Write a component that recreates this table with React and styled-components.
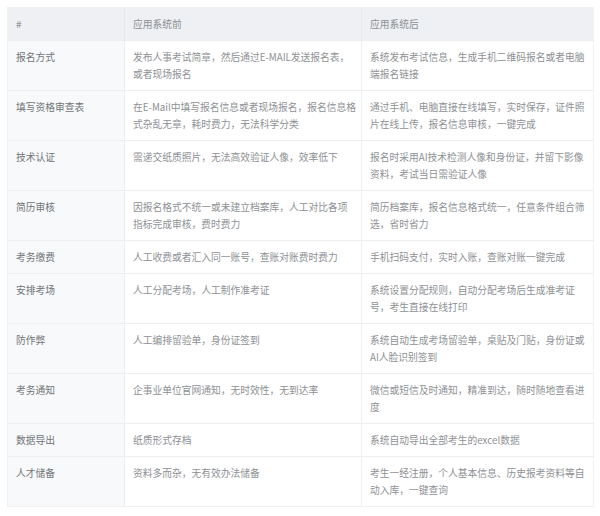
import React from "react";
import styled, { createGlobalStyle } from "styled-components";

const GlobalStyle = createGlobalStyle`
body {
  margin: 0;
  background: #fff;
  font-family: "Noto Sans CJK SC", "Noto Sans", sans-serif;
}
`;

const Page = styled.div`
padding: 7px 7px 8px 7px;
`;

const Table = styled.table`
width: 586px;
border-collapse: collapse;
table-layout: fixed;
font-size: 9.75px;
line-height: 17px;
border: 1px solid #f0f1f3;
`;

const HeadCell = styled.th`
background: #eef0f3;
color: #8c8f94;
font-weight: 400;
text-align: left;
padding: 8px 4px 7px 8px;
border-left: 1px solid #e6e8ec;
height: 17px;
&:first-child {
  border-left: none;
}
`;

const Row = styled.tr`
border-top: 1px solid #eceef1;
`;

const NameCell = styled.td`
background: #f8f9fa;
color: #707378;
font-weight: 400;
padding: 8px 4px 7px 8px;
vertical-align: top;
border-right: 1px solid #eceef1;
`;

const Cell = styled.td`
color: #8e9195;
padding: 8px 4px 7px 8px;
vertical-align: top;
border-left: 1px solid #eceef1;
height: ${p => (p.$tall ? "34px" : "17px")};
`;

const rows = [
  ["报名方式", "发布人事考试简章，然后通过E-MAIL发送报名表，或者现场报名", "系统发布考试信息，生成手机二维码报名或者电脑端报名链接"],
  ["填写资格审查表", "在E-Mail中填写报名信息或者现场报名，报名信息格式杂乱无章，耗时费力，无法科学分类", "通过手机、电脑直接在线填写，实时保存，证件照片在线上传，报名信息审核，一键完成"],
  ["技术认证", "需递交纸质照片，无法高效验证人像，效率低下", "报名时采用AI技术检测人像和身份证，并留下影像资料，考试当日需验证人像"],
  ["简历审核", "因报名格式不统一或未建立档案库，人工对比各项指标完成审核，费时费力", "简历档案库，报名信息格式统一，任意条件组合筛选，省时省力"],
  ["考务缴费", "人工收费或者汇入同一账号，查账对账费时费力", "手机扫码支付，实时入账，查账对账一键完成"],
  ["安排考场", "人工分配考场，人工制作准考证", "系统设置分配规则，自动分配考场后生成准考证号，考生直接在线打印"],
  ["防作弊", "人工编排留验单，身份证签到", "系统自动生成考场留验单，桌贴及门贴，身份证或AI人脸识别签到"],
  ["考务通知", "企事业单位官网通知，无时效性，无到达率", "微信或短信及时通知，精准到达，随时随地查看进度"],
  ["数据导出", "纸质形式存档", "系统自动导出全部考生的excel数据"],
  ["人才储备", "资料多而杂，无有效办法储备", "考生一经注册，个人基本信息、历史报考资料等自动入库，一键查询"],
];

const tall = [true, true, true, true, false, true, true, true, false, true];

export default function App() {
  return (
    <Page>
      <GlobalStyle />
      <Table>
        <colgroup>
          <col style={{ width: 117 }} />
          <col style={{ width: 237 }} />
          <col style={{ width: 232 }} />
        </colgroup>
        <thead>
          <tr>
            <HeadCell>#</HeadCell>
            <HeadCell>应用系统前</HeadCell>
            <HeadCell>应用系统后</HeadCell>
          </tr>
        </thead>
        <tbody>
          {rows.map((r, i) => (
            <Row key={r[0]}>
              <NameCell>{r[0]}</NameCell>
              <Cell $tall={tall[i]}>{r[1]}</Cell>
              <Cell $tall={tall[i]}>{r[2]}</Cell>
            </Row>
          ))}
        </tbody>
      </Table>
    </Page>
  );
}
